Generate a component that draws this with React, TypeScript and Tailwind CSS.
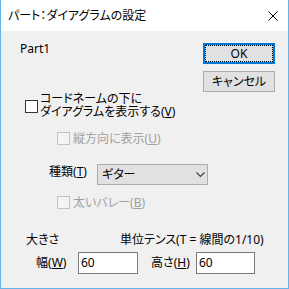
import React from "react";

const font =
  "font-['Noto_Sans','Noto_Sans_CJK_JP',sans-serif] [font-feature-settings:'palt'] text-[12px] leading-[12px] text-black";

function Mn({ c }: { c: string }) {
  return (
    <>
      (<span className="underline underline-offset-[1px]">{c}</span>)
    </>
  );
}

function DisabledCheck({ children }: { children: React.ReactNode }) {
  return (
    <div className="flex items-center pl-[56px]">
      <div className="w-[13px] h-[13px] border border-[#c4c4c4] bg-[#f4f4f4]" />
      <span className="ml-[3px] text-[#a0a0a0]">{children}</span>
    </div>
  );
}

export default function App() {
  return (
    <div
      className={`${font} w-[289px] h-[289px] flex flex-col border-x border-b border-[#64b5ec] overflow-hidden`}
    >
      {/* title bar */}
      <div className="h-[31px] shrink-0 bg-white flex items-center justify-between pl-[7px] pr-[10px]">
        <span>パート：ダイアグラムの設定</span>
        <svg width="10" height="10" viewBox="0 0 10 10">
          <path d="M0.5 0.5 L9.5 9.5 M9.5 0.5 L0.5 9.5" stroke="#000" strokeWidth="1" />
        </svg>
      </div>

      {/* body */}
      <div className="flex-1 bg-[#f0f0f0] flex flex-col">
        <div className="flex justify-between items-start pt-[12px] pr-[13px]">
          <span className="pl-[19px]">Part1</span>
          <div className="flex flex-col gap-[7px]">
            <div className="relative w-[72px] h-[21px] border-2 border-[#0078d7] bg-[#e1e1e1] flex items-center justify-center">
              <span className="absolute inset-0 border border-dotted border-black" />
              <span>OK</span>
            </div>
            <div className="w-[72px] h-[21px] border border-[#adadad] bg-[#e1e1e1] flex items-center justify-center">
              キャンセル
            </div>
          </div>
        </div>

        {/* main checkbox */}
        <div className="flex items-start pl-[24px]">
          <div className="mt-[8px] w-[13px] h-[13px] border border-[#333333] bg-white shrink-0" />
          <p className="ml-[2px] leading-[13px]">
            コードネームの下に
            <br />
            ダイアグラムを表示する<Mn c="V" />
          </p>
        </div>

        <div className="mt-[14px]">
          <DisabledCheck>
            縦方向に表示<Mn c="U" />
          </DisabledCheck>
        </div>

        {/* kind select */}
        <div className="mt-[19px] flex items-start pl-[48px]">
          <span className="w-[48px] mt-[2px]">
            種類<Mn c="T" />
          </span>
          <div className="w-[111px] h-[21px] border border-[#adadad] bg-[#e1e1e1] flex items-center justify-between pl-[4px] pr-[2px]">
            <span>ギター</span>
            <svg width="9" height="6" viewBox="0 0 9 6">
              <path d="M0.5 0.5 L4.5 4.5 L8.5 0.5" fill="none" stroke="#404040" strokeWidth="1.2" />
            </svg>
          </div>
        </div>

        <div className="mt-[11px]">
          <DisabledCheck>
            太いバレー<Mn c="B" />
          </DisabledCheck>
        </div>

        {/* size */}
        <div className="mt-[25px] flex pl-[25px]">
          <span className="w-[94px]">大きさ</span>
          <span>単位テンス(T = 線間の1/10)</span>
        </div>

        <div className="mt-[6px] flex items-center pl-[35px]">
          <span className="w-[42px]">
            幅<Mn c="W" />
          </span>
          <div className="w-[60px] h-[22px] border border-[#7a7a7a] bg-white flex items-center pl-[2px]">
            60
          </div>
          <span className="ml-[13px] w-[45px]">
            高さ<Mn c="H" />
          </span>
          <div className="w-[59px] h-[22px] border border-[#7a7a7a] bg-white flex items-center pl-[2px]">
            60
          </div>
        </div>
      </div>
    </div>
  );
}
